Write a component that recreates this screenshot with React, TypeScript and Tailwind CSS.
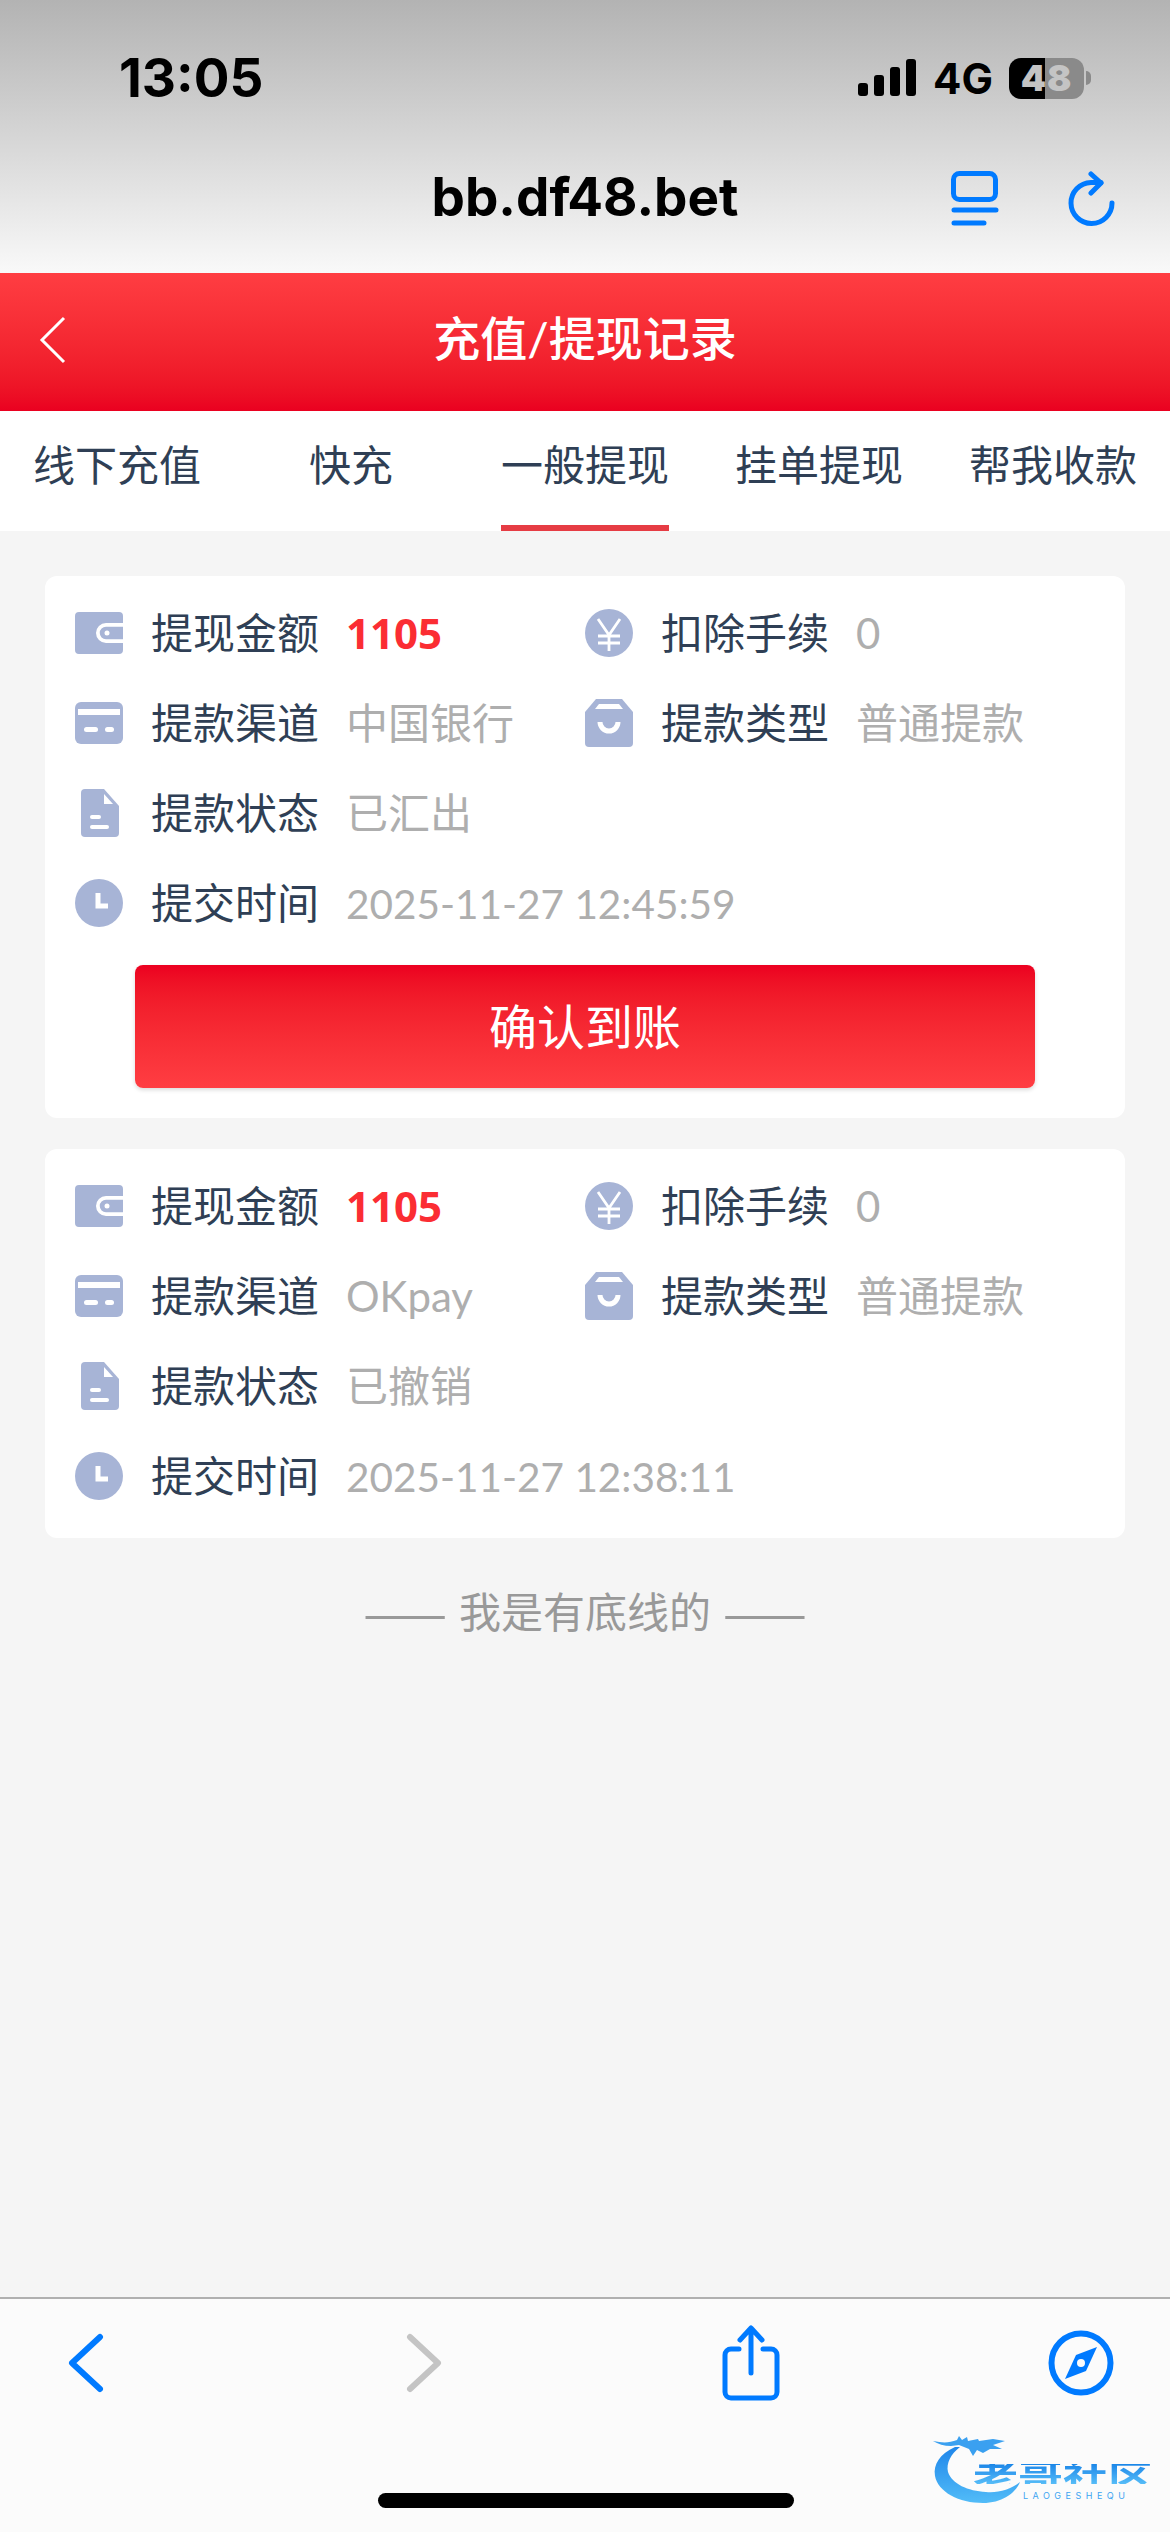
const cjk = 'font-["Lato","Noto_Sans_CJK_SC",sans-serif]';

const tabs = ['线下充值', '快充', '一般提现', '挂单提现', '帮我收款'];

const records = [
  { amount: '1105', channel: '中国银行', status: '已汇出', time: '2025-11-27 12:45:59', confirm: true },
  { amount: '1105', channel: 'OKpay', status: '已撤销', time: '2025-11-27 12:38:11', confirm: false },
];

function WalletIcon() {
  return (
    <svg className="h-12 w-12 shrink-0" viewBox="0 0 48 48">
      <path d="M4 3h40a4 4 0 0 1 4 4v7H31a10 10 0 0 0 0 20h17v7a4 4 0 0 1-4 4H4a4 4 0 0 1-4-4V7a4 4 0 0 1 4-4z" fill="#a7b4d6" />
      <path d="M31 16h17v16H31a8 8 0 0 1 0-16z" fill="#a7b4d6" />
      <path d="M48 16.500H31a7.500 7.500 0 0 0 0 15h17" fill="none" stroke="#fff" strokeWidth="2.500" />
      <circle cx="32" cy="24" r="2.500" fill="#fff" />
    </svg>
  );
}

function YuanIcon() {
  return (
    <svg className="h-12 w-12 shrink-0" viewBox="0 0 48 48">
      <circle cx="24" cy="24" r="24" fill="#a7b4d6" />
      <path d="M13 10l11 16 11-16M13 27h22M13 34h22M24 26v16" fill="none" stroke="#fff" strokeWidth="2.800" />
    </svg>
  );
}

function CardIcon() {
  return (
    <svg className="h-12 w-12 shrink-0" viewBox="0 0 48 48">
      <rect y="3" width="48" height="42" rx="6" fill="#a7b4d6" />
      <rect x="3" y="10" width="42" height="6" fill="#fff" />
      <rect x="9" y="28" width="14" height="5" rx="2.500" fill="#fff" />
      <rect x="30" y="28" width="9" height="5" rx="2.500" fill="#fff" />
    </svg>
  );
}

function BagIcon() {
  return (
    <svg className="h-12 w-12 shrink-0" viewBox="0 0 48 48">
      <path d="M11 0h26l11 13v31a4 4 0 0 1-4 4H4a4 4 0 0 1-4-4V13z" fill="#a7b4d6" />
      <path d="M10 10l4-5h20l4 5z" fill="#fff" />
      <path d="M15 23a9 9 0 0 0 18 0" fill="none" stroke="#fff" strokeWidth="5" />
    </svg>
  );
}

function DocIcon() {
  return (
    <svg className="h-12 w-12 shrink-0" viewBox="0 0 48 48">
      <path d="M10 0h19l15 17v27a4 4 0 0 1-4 4H10a4 4 0 0 1-4-4V4a4 4 0 0 1 4-4z" fill="#a7b4d6" />
      <path d="M29 5v10h9z" fill="#fff" />
      <rect x="15" y="26" width="11" height="4" rx="2" fill="#fff" />
      <rect x="15" y="36" width="19" height="4" rx="2" fill="#fff" />
    </svg>
  );
}

function ClockIcon() {
  return (
    <svg className="h-12 w-12 shrink-0" viewBox="0 0 48 48">
      <circle cx="24" cy="24" r="24" fill="#a7b4d6" />
      <path d="M23 14v13h10" fill="none" stroke="#fff" strokeWidth="5" />
    </svg>
  );
}

function Field({ icon, label, children }: { icon: React.ReactNode; label: string; children: React.ReactNode }) {
  return (
    <div className="flex h-[90px] items-center">
      {icon}
      <span className="ml-[28px] w-[168px] shrink-0 text-[42px] text-[#2f3f55]">{label}</span>
      <span className="ml-[27px] whitespace-nowrap text-[42px] text-[#aeaeae]">{children}</span>
    </div>
  );
}

function RecordCard({ amount, channel, status, time, confirm }: (typeof records)[number]) {
  return (
    <div className={`rounded-xl bg-white pt-3 ${confirm ? 'pb-[30px]' : 'pb-[17px]'}`}>
      <div className="grid grid-cols-[510px_1fr] pl-[30px]">
        <Field icon={<WalletIcon />} label="提现金额">
          <span className='font-["Open_Sans",sans-serif] text-[42px] font-bold text-[#fb2d33]'>{amount}</span>
        </Field>
        <Field icon={<YuanIcon />} label="扣除手续">0</Field>
        <Field icon={<CardIcon />} label="提款渠道">{channel}</Field>
        <Field icon={<BagIcon />} label="提款类型">普通提款</Field>
        <div className="col-span-2">
          <Field icon={<DocIcon />} label="提款状态">{status}</Field>
        </div>
        <div className="col-span-2">
          <Field icon={<ClockIcon />} label="提交时间">
            <span className="text-[40.5px]">{time}</span>
          </Field>
        </div>
      </div>
      {confirm && (
        <div className="mx-[90px] mt-[17px] flex h-[123px] items-center justify-center rounded-lg bg-gradient-to-b from-[#ec0020] to-[#ff3d42] text-[48px] text-white shadow-[0_2px_4px_rgba(0,0,0,0.15)]">
          确认到账
        </div>
      )}
    </div>
  );
}

function LaogeLogo() {
  return (
    <div className="absolute bottom-[26px] right-[10px] h-[76px] w-[230px]">
      <svg className="absolute left-0 top-0 h-[76px] w-[100px] blur-[0.6px]" viewBox="0 0 100 76">
        <defs>
          <linearGradient id="logoArc" x1="0" y1="0" x2="0" y2="1">
            <stop offset="0" stopColor="#1f86ea" />
            <stop offset="1" stopColor="#52bcf8" />
          </linearGradient>
        </defs>
        <path d="M25 17C10 24 3 34 5 46c3 16 24 27 48 27 18 0 32-9 37-21-10 8-22 11-34 10-18-1-34-8-38-20-2-9 3-18 12-25z" fill="url(#logoArc)" />
        <path d="M3 11c10 2 16 2 24-1l2-4 3 4 5-3 1 4 10-2 1 2 14-2 12 2-12 4 9 4-12 0-7 4-6-3-4 6-4-7-10-4-8 1C14 16 8 14 3 11z" fill="#3aa0f0" />
      </svg>
      <div className='absolute left-[43px] top-[30px] h-[28px] origin-center scale-y-[0.72] bg-gradient-to-b from-[#1a86e8] to-[#56bdf8] bg-clip-text font-["Noto_Sans_CJK_SC",sans-serif] text-[45px] font-bold leading-[28px] text-transparent'>
        老哥社区
      </div>
      <div className='absolute left-[93px] top-[61px] font-["Inter",sans-serif] text-[9px] leading-[10px] tracking-[4.5px] text-[#3da5f2]'>
        LAOGESHEQU
      </div>
    </div>
  );
}

export default function App() {
  return (
    <div className={`relative flex h-[2532px] w-[1170px] flex-col overflow-hidden bg-[#f5f5f5] ${cjk}`}>
      {/* safari top */}
      <div className='relative h-[273px] bg-gradient-to-b from-[#b3b3b3] to-[#f9f9f9] font-["Inter",sans-serif] text-black'>
        <div className="flex h-[156px] items-center pl-[119px] pr-[79px]">
          <span className="pt-0.5 text-[53px] font-bold">13:05</span>
          <div className="ml-auto flex items-center">
            <svg className="h-[38px] w-[58px]" viewBox="0 0 58 38" fill="#000">
              <rect x="0" y="24" width="10" height="13" rx="3" />
              <rect x="16" y="16" width="10" height="21" rx="3" />
              <rect x="32" y="8" width="10" height="29" rx="3" />
              <rect x="48" y="0" width="10" height="37" rx="3" />
            </svg>
            <span className="ml-[17px] text-[42px] font-bold">4G</span>
            <div className="ml-[16px] flex items-center">
              <div className="h-[41px] w-[75px] rounded-xl bg-[linear-gradient(90deg,#000_48%,#8a8a8a_48%)] text-center text-[36px] font-black leading-[41px] tracking-[1px] text-[#c4c4c4]">
                48
              </div>
              <div className="ml-[2px] h-[14px] w-[5px] rounded-r-full bg-[#8a8a8a]" />
            </div>
          </div>
        </div>
        <div className="flex h-[84px] items-center justify-center text-[53px] font-bold">bb.df48.bet</div>
        <svg className="absolute left-[951px] top-[171px] h-[56px] w-[48px]" viewBox="0 0 48 56" fill="none" stroke="#007aff">
          <rect x="2.500" y="2.500" width="42" height="26" rx="6" strokeWidth="5" />
          <path d="M3 39h42M3 52h30" strokeWidth="5" strokeLinecap="round" />
        </svg>
        <svg className="absolute left-[1068px] top-[171px] h-[56px] w-[48px]" viewBox="0 0 48 56" fill="none" stroke="#007aff" strokeWidth="5" strokeLinecap="round" strokeLinejoin="round">
          <path d="M44 32a20.500 20.500 0 1 1-21-20.500h10" />
          <path d="M23 3l10 9-10 10" />
        </svg>
      </div>

      {/* title bar */}
      <div className="relative flex h-[138px] items-center justify-center bg-gradient-to-b from-[#ff3d42] to-[#ea0020] pb-2 text-[47px] font-medium text-white">
        <svg className="absolute left-[38px] top-[42px] h-[50px] w-[30px]" viewBox="0 0 30 50" fill="none" stroke="#fff" strokeWidth="3">
          <path d="M26 3L4 25l22 22" />
        </svg>
        充值/提现记录
      </div>

      {/* tabs */}
      <div className="flex h-[120px] bg-white">
        {tabs.map((tab, i) => (
          <div key={tab} className="relative flex w-[234px] items-center justify-center pb-[12px] text-[42px] text-[#2f3f55]">
            {tab}
            {i === 2 && <div className="absolute bottom-0 h-[6px] w-[168px] bg-[#e63c44]" />}
          </div>
        ))}
      </div>

      {/* list */}
      <div className="flex flex-1 flex-col gap-[31px] px-[45px] pt-[45px]">
        {records.map((r) => (
          <RecordCard key={r.time} {...r} />
        ))}
        <div className='mt-[11px] flex h-[60px] items-center justify-center gap-[12px] font-["Noto_Sans_CJK_SC",sans-serif] text-[42px] text-[#999]'>
          <span className="text-[50px] leading-[60px]">——</span>
          <span className="leading-[60px]">我是有底线的</span>
          <span className="text-[50px] leading-[60px]">——</span>
        </div>
      </div>

      {/* safari bottom */}
      <div className="relative h-[235px] border-t-2 border-[#b0b0b0] bg-[#fbfbfb]">
        <div className="flex h-[128px] items-center pl-[66px]">
          <svg className="h-[60px] w-[40px]" viewBox="0 0 40 60" fill="none" stroke="#007aff" strokeWidth="6" strokeLinecap="round" strokeLinejoin="round">
            <path d="M34 4L6 30l28 26" />
          </svg>
          <svg className="ml-[298px] h-[60px] w-[40px]" viewBox="0 0 40 60" fill="none" stroke="#c4c4c4" strokeWidth="6" strokeLinecap="round" strokeLinejoin="round">
            <path d="M6 4l28 26L6 56" />
          </svg>
          <svg className="ml-[278px] h-[76px] w-[58px]" viewBox="0 0 58 76" fill="none" stroke="#007aff" strokeWidth="5" strokeLinecap="round" strokeLinejoin="round">
            <path d="M17 24H9a6 6 0 0 0-6 6v37a6 6 0 0 0 6 6h40a6 6 0 0 0 6-6V30a6 6 0 0 0-6-6h-8" />
            <path d="M29 48V4M18 15L29 3l11 12" />
          </svg>
          <svg className="ml-[268px] h-[66px] w-[66px]" viewBox="0 0 66 66">
            <circle cx="33" cy="33" r="29.500" fill="none" stroke="#007aff" strokeWidth="6" />
            <path d="M49 17L38 41 17 49l11-24z" fill="#007aff" />
            <circle cx="33" cy="33" r="4" fill="#fbfbfb" />
          </svg>
        </div>
        <div className="absolute bottom-[24px] left-[378px] h-[15px] w-[416px] rounded-full bg-black" />
        <LaogeLogo />
      </div>
    </div>
  );
}
